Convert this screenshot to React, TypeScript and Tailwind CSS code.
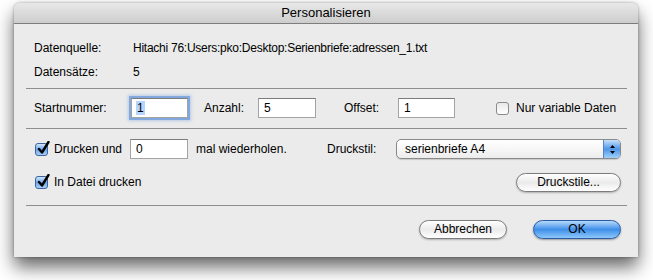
import React from "react";

const font = "font-['Liberation_Sans',Arial,sans-serif]";

function Checkbox({ checked }: { checked?: boolean }) {
  if (!checked) {
    return (
      <span className="w-[13px] h-[13px] rounded-[3px] border border-[#8a8a8a] bg-gradient-to-b from-[#e9e9e9] to-white shrink-0" />
    );
  }
  return (
    <span className="relative w-[13px] h-[13px] rounded-[3px] border border-[#3c64a0] bg-gradient-to-b from-[#d4e6fb] via-[#6aa6ec] to-[#a9d0fa] shrink-0">
      <svg className="absolute -top-[3px] left-[1px]" width="13" height="14" viewBox="0 0 13 14">
        <path d="M2 8 L5 11.5 L11.5 1" fill="none" stroke="#000" strokeWidth="2.4" strokeLinecap="round" strokeLinejoin="round" />
      </svg>
    </span>
  );
}

function Field({ value, width, focused }: { value: string; width: string; focused?: boolean }) {
  return (
    <div
      className={`${width} h-[20px] bg-white border border-[#a3a3a3] border-t-[#7c7c7c] flex items-center pl-[4px] shrink-0 ${
        focused ? "shadow-[0_0_0_2px_rgba(104,152,220,0.7),0_0_3px_3px_rgba(104,152,220,0.4)] border-[#6d8fc4]" : ""
      }`}
    >
      <span className={focused ? "bg-[#b5d5ff] px-px leading-[14px]" : "px-px"}>{value}</span>
    </div>
  );
}

function PillButton({ label, width, primary }: { label: string; width: string; primary?: boolean }) {
  return (
    <div
      className={`${width} h-[19px] rounded-full border flex items-center justify-center shrink-0 ${
        primary
          ? "border-[#2b5ba6] bg-gradient-to-b from-[#b6dafb] via-[#3f8ee8] to-[#8cc8fb] shadow-[0_1px_2px_rgba(0,0,0,0.35)]"
          : "border-[#7c7c7c] bg-gradient-to-b from-white via-[#ebebeb] to-white shadow-[0_1px_2px_rgba(0,0,0,0.25)]"
      }`}
    >
      {label}
    </div>
  );
}

export default function App() {
  return (
    <div className={`w-[653px] h-[280px] bg-white pl-[14px] pt-[3px] text-[12px] text-black ${font}`}>
      <div className="w-[624px] h-[254px] rounded-t-[6px] bg-[#ebebeb] shadow-[0_10px_18px_rgba(0,0,0,0.6),0_0_3px_rgba(0,0,0,0.35)] flex flex-col">
        {/* title bar */}
        <div className="h-[21px] rounded-t-[6px] bg-gradient-to-b from-[#e8e8e8] to-[#cdcdcd] border-b border-[#7d7d7d] flex items-center justify-center text-[13px] shrink-0">
          Personalisieren
        </div>

        <div className="flex flex-col pt-[12px] pl-[20px] pr-[17px]">
          <div className="h-[24px] flex items-center">
            <span className="w-[99px]">Datenquelle:</span>
            <span className="tracking-[-0.25px]">Hitachi 76:Users:pko:Desktop:Serienbriefe:adressen_1.txt</span>
          </div>
          <div className="h-[24px] flex items-center">
            <span className="w-[99px]">Datensätze:</span>
            <span>5</span>
          </div>
        </div>

        <div className="mt-[4px] ml-[12px] mr-[11px] h-px bg-[#8e8e8e]" />

        <div className="mt-[7px] h-[24px] flex items-center pl-[20px] pr-[17px]">
          <span className="w-[97px]">Startnummer:</span>
          <Field value="1" width="w-[57px]" focused />
          <span className="ml-[16px] w-[54px]">Anzahl:</span>
          <Field value="5" width="w-[58px]" />
          <span className="ml-[28px] w-[54px]">Offset:</span>
          <Field value="1" width="w-[57px]" />
          <span className="ml-[41px] flex items-center gap-[7px]">
            <Checkbox />
            <span>Nur variable Daten</span>
          </span>
        </div>

        <div className="mt-[8px] ml-[12px] mr-[11px] h-px bg-[#8e8e8e]" />

        <div className="mt-[8px] h-[24px] flex items-center pl-[21px] pr-[17px]">
          <span className="flex items-center gap-[6px] w-[95px]">
            <Checkbox checked />
            <span>Drucken und</span>
          </span>
          <Field value="0" width="w-[58px]" />
          <span className="ml-[8px] w-[131px]">mal wiederholen.</span>
          <span className="w-[69px]">Druckstil:</span>
          <div className="flex-1 h-[20px] rounded-[5px] border border-[#8a8a8a] bg-gradient-to-b from-white via-[#f7f7f7] to-[#ececec] flex items-stretch overflow-hidden shadow-[0_1px_1px_rgba(0,0,0,0.15)]">
            <span className="flex-1 flex items-center pl-[8px]">serienbriefe A4</span>
            <span className="w-[17px] border-l border-[#5a83bd] bg-gradient-to-b from-[#c5e0fb] via-[#4d95e8] to-[#9fd0fb] flex items-center justify-center">
              <svg width="7" height="11" viewBox="0 0 7 11">
                <path d="M3.5 1 L6 4 L1 4 Z M3.5 10 L6 7 L1 7 Z" fill="#000" />
              </svg>
            </span>
          </div>
        </div>

        <div className="mt-[9px] h-[24px] flex items-center pl-[21px] pr-[17px]">
          <span className="flex items-center gap-[6px]">
            <Checkbox checked />
            <span>In Datei drucken</span>
          </span>
          <span className="flex-1" />
          <PillButton label="Druckstile..." width="w-[105px]" />
        </div>

        <div className="mt-[11px] ml-[12px] mr-[11px] h-px bg-[#8e8e8e]" />

        <div className="mt-[11px] h-[24px] flex items-center justify-end gap-[26px] pr-[17px]">
          <PillButton label="Abbrechen" width="w-[88px]" />
          <PillButton label="OK" width="w-[88px]" primary />
        </div>
      </div>
    </div>
  );
}
